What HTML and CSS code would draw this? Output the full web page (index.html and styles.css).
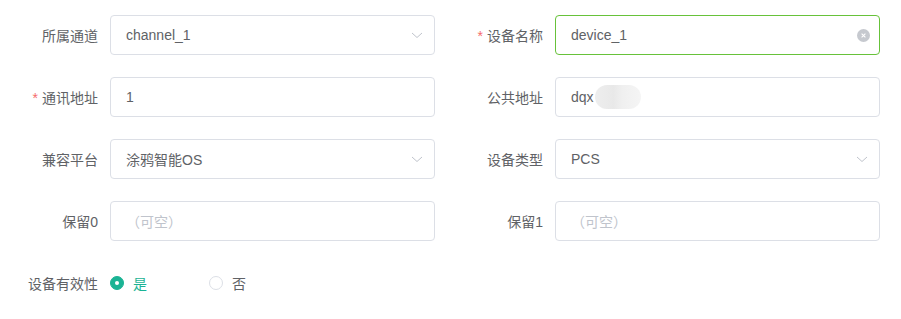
FILE: index.html
```html
<!DOCTYPE html>
<html lang="zh-CN">
<head>
    <meta charset="UTF-8">
    <title>设备编辑</title>
    <link rel="stylesheet" href="styles.css">
</head>
<body>
    <form class="device-form">
        <div class="form-grid">
            <div class="form-item">
                <label class="item-label">所属通道</label>
                <div class="field select">
                    <span class="value">channel_1</span>
                    <svg class="arrow" width="12" height="12" viewBox="0 0 12 12"><path d="M1 4 L6 8.5 L11 4" fill="none" stroke="#c0c4cc" stroke-width="1"/></svg>
                </div>
            </div>
            <div class="form-item">
                <label class="item-label"><span class="req">*</span>设备名称</label>
                <div class="field focused">
                    <span class="value">device_1</span>
                    <svg class="clear" width="13" height="13" viewBox="0 0 13 13"><circle cx="6.5" cy="6.5" r="6.5" fill="#c6c9cf"/><path d="M4.6 4.6 L8.4 8.4 M8.4 4.6 L4.6 8.4" stroke="#fff" stroke-width="1.1"/></svg>
                </div>
            </div>

            <div class="form-item">
                <label class="item-label"><span class="req">*</span>通讯地址</label>
                <div class="field"><span class="value">1</span></div>
            </div>
            <div class="form-item">
                <label class="item-label">公共地址</label>
                <div class="field"><span class="value">dqx</span><span class="blur"></span></div>
            </div>

            <div class="form-item">
                <label class="item-label">兼容平台</label>
                <div class="field select">
                    <span class="value">涂鸦智能OS</span>
                    <svg class="arrow" width="12" height="12" viewBox="0 0 12 12"><path d="M1 4 L6 8.5 L11 4" fill="none" stroke="#c0c4cc" stroke-width="1"/></svg>
                </div>
            </div>
            <div class="form-item">
                <label class="item-label">设备类型</label>
                <div class="field select">
                    <span class="value">PCS</span>
                    <svg class="arrow" width="12" height="12" viewBox="0 0 12 12"><path d="M1 4 L6 8.5 L11 4" fill="none" stroke="#c0c4cc" stroke-width="1"/></svg>
                </div>
            </div>

            <div class="form-item">
                <label class="item-label">保留0</label>
                <div class="field"><span class="placeholder">（可空）</span></div>
            </div>
            <div class="form-item">
                <label class="item-label">保留1</label>
                <div class="field"><span class="placeholder">（可空）</span></div>
            </div>

            <div class="form-item">
                <label class="item-label">设备有效性</label>
                <div class="radio-group">
                    <span class="radio checked"><span class="dot"></span><span class="radio-text">是</span></span>
                    <span class="radio"><span class="dot"></span><span class="radio-text">否</span></span>
                </div>
            </div>
        </div>
    </form>
</body>
</html>
```

FILE: styles.css
```css
body {
    margin: 0;
    background: #fff;
    font-family: "Liberation Sans", "Noto Sans CJK SC", sans-serif;
    font-size: 14px;
    color: #606266;
}

.device-form {
    padding-top: 15px;
}

.form-grid {
    display: grid;
    grid-template-columns: 435px 435px;
    column-gap: 10px;
    row-gap: 22px;
}

.form-item {
    display: flex;
    align-items: center;
    height: 40px;
}

.item-label {
    width: 110px;
    padding-right: 12px;
    box-sizing: border-box;
    text-align: right;
    color: #606266;
}

.req {
    color: #f56c6c;
    margin-right: 4px;
}

.field {
    flex: 1;
    height: 40px;
    box-sizing: border-box;
    border: 1px solid #dcdfe6;
    border-radius: 4px;
    display: flex;
    align-items: center;
    padding: 0 15px;
}

.field.focused {
    border-color: #67c23a;
}

.value {
    flex: none;
}

.placeholder {
    color: #c0c4cc;
}

.arrow {
    margin-left: auto;
    margin-right: -4px;
}

.clear {
    margin-left: auto;
    margin-right: -6px;
}

.blur {
    width: 46px;
    height: 24px;
    margin-left: 1px;
    border-radius: 12px;
    background: linear-gradient(90deg, #ececec 0, #e6e6e6 40%, #eeeeee 60%, #f4f4f4 100%);
    opacity: 0.9;
}

.radio-group {
    display: flex;
    align-items: center;
}

.radio {
    display: flex;
    align-items: center;
    width: 99px;
}

.dot {
    width: 14px;
    height: 14px;
    box-sizing: border-box;
    border-radius: 50%;
    border: 1px solid #dcdfe6;
    margin-right: 9px;
    position: relative;
}

.radio.checked .dot {
    background: #1ab394;
    border-color: #1ab394;
}

.radio.checked .dot::after {
    content: "";
    position: absolute;
    left: 4px;
    top: 4px;
    width: 4px;
    height: 4px;
    border-radius: 50%;
    background: #fff;
}

.radio.checked .radio-text {
    color: #1ab394;
}
```
